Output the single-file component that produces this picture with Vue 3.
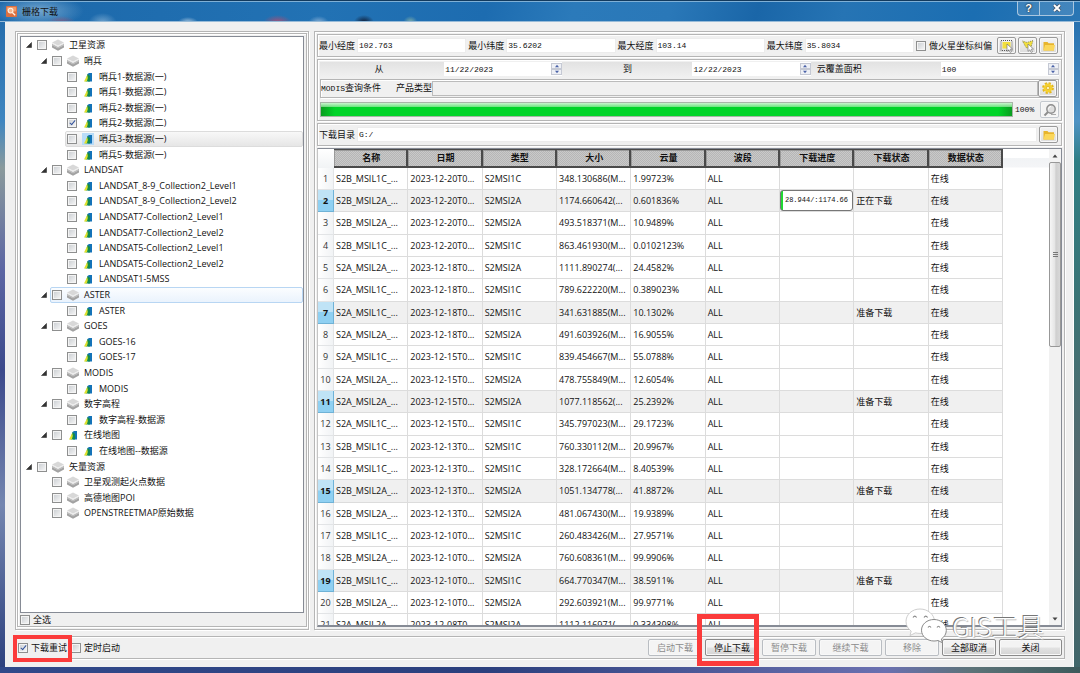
<script setup>
import { reactive, ref } from 'vue'

const tree = reactive([
  { level: 0, open: true, icon: 'stack', label: '卫星资源' },
  { level: 1, open: true, icon: 'stack', label: '哨兵' },
  { level: 2, icon: 'layer', label: '哨兵1-数据源(一)' },
  { level: 2, icon: 'layer', label: '哨兵1-数据源(二)' },
  { level: 2, icon: 'layer', label: '哨兵2-数据源(一)' },
  { level: 2, icon: 'layer', label: '哨兵2-数据源(二)', checked: true },
  { level: 2, icon: 'layer', label: '哨兵3-数据源(一)', state: 'selected' },
  { level: 2, icon: 'layer', label: '哨兵5-数据源(一)' },
  { level: 1, open: true, icon: 'stack', label: 'LANDSAT' },
  { level: 2, icon: 'layer', label: 'LANDSAT_8-9_Collection2_Level1' },
  { level: 2, icon: 'layer', label: 'LANDSAT_8-9_Collection2_Level2' },
  { level: 2, icon: 'layer', label: 'LANDSAT7-Collection2_Level1' },
  { level: 2, icon: 'layer', label: 'LANDSAT7-Collection2_Level2' },
  { level: 2, icon: 'layer', label: 'LANDSAT5-Collection2_Level1' },
  { level: 2, icon: 'layer', label: 'LANDSAT5-Collection2_Level2' },
  { level: 2, icon: 'layer', label: 'LANDSAT1-5MSS' },
  { level: 1, open: true, icon: 'stack', label: 'ASTER', state: 'hovered' },
  { level: 2, icon: 'layer', label: 'ASTER' },
  { level: 1, open: true, icon: 'stack', label: 'GOES' },
  { level: 2, icon: 'layer', label: 'GOES-16' },
  { level: 2, icon: 'layer', label: 'GOES-17' },
  { level: 1, open: true, icon: 'stack', label: 'MODIS' },
  { level: 2, icon: 'layer', label: 'MODIS' },
  { level: 1, open: true, icon: 'stack', label: '数字高程' },
  { level: 2, icon: 'layer', label: '数字高程-数据源' },
  { level: 1, open: true, icon: 'layer', label: '在线地图' },
  { level: 2, icon: 'layer', label: '在线地图--数据源' },
  { level: 0, open: true, icon: 'stack', label: '矢量资源' },
  { level: 1, icon: 'stack', label: '卫星观测起火点数据' },
  { level: 1, icon: 'stack', label: '高德地图POI' },
  { level: 1, icon: 'stack', label: 'OPENSTREETMAP原始数据' },
])

const bounds = reactive([
  { id: 'min-lon', label: '最小经度', value: '102.763' },
  { id: 'min-lat', label: '最小纬度', value: '35.6202' },
  { id: 'max-lon', label: '最大经度', value: '103.14' },
  { id: 'max-lat', label: '最大纬度', value: '35.8034' },
])

const filters = reactive([
  { id: 'date-from', label: '从', value: '11/22/2023', centered: true },
  { id: 'date-to', label: '到', value: '12/22/2023', centered: true },
  { id: 'cloud', label: '云覆盖面积', value: '100', centered: false },
])

const productType = ref('')
const folder = ref('G:/')
const marsFix = ref(false)
const selectAll = ref(false)
const retry = ref(true)
const scheduled = ref(false)
const percent = ref(100)

const columns = ['名称', '日期', '类型', '大小', '云量', '波段', '下载进度', '下载状态', '数据状态']

const waiting = '准备下载'
const rows = [
  ['S2B_MSIL1C_...', '2023-12-20T0...', 'S2MSI1C', '348.130686(M...', '1.99723%', ''],
  ['S2B_MSIL2A_...', '2023-12-20T0...', 'S2MSI2A', '1174.660642(...', '0.601836%', '正在下载'],
  ['S2B_MSIL2A_...', '2023-12-20T0...', 'S2MSI2A', '493.518371(M...', '10.9489%', ''],
  ['S2B_MSIL1C_...', '2023-12-20T0...', 'S2MSI1C', '863.461930(M...', '0.0102123%', ''],
  ['S2A_MSIL2A_...', '2023-12-18T0...', 'S2MSI2A', '1111.890274(...', '24.4582%', ''],
  ['S2A_MSIL1C_...', '2023-12-18T0...', 'S2MSI1C', '789.622220(M...', '0.389023%', ''],
  ['S2A_MSIL1C_...', '2023-12-18T0...', 'S2MSI1C', '341.631885(M...', '10.1302%', waiting],
  ['S2A_MSIL2A_...', '2023-12-18T0...', 'S2MSI2A', '491.603926(M...', '16.9055%', ''],
  ['S2A_MSIL1C_...', '2023-12-15T0...', 'S2MSI1C', '839.454667(M...', '55.0788%', ''],
  ['S2A_MSIL2A_...', '2023-12-15T0...', 'S2MSI2A', '478.755849(M...', '12.6054%', ''],
  ['S2A_MSIL2A_...', '2023-12-15T0...', 'S2MSI2A', '1077.118562(...', '25.2392%', waiting],
  ['S2A_MSIL1C_...', '2023-12-15T0...', 'S2MSI1C', '345.797023(M...', '29.1723%', ''],
  ['S2B_MSIL1C_...', '2023-12-13T0...', 'S2MSI1C', '760.330112(M...', '20.9967%', ''],
  ['S2B_MSIL1C_...', '2023-12-13T0...', 'S2MSI1C', '328.172664(M...', '8.40539%', ''],
  ['S2B_MSIL2A_...', '2023-12-13T0...', 'S2MSI2A', '1051.134778(...', '41.8872%', waiting],
  ['S2B_MSIL2A_...', '2023-12-13T0...', 'S2MSI2A', '481.067430(M...', '19.9389%', ''],
  ['S2B_MSIL1C_...', '2023-12-10T0...', 'S2MSI1C', '260.483426(M...', '27.9571%', ''],
  ['S2B_MSIL2A_...', '2023-12-10T0...', 'S2MSI2A', '760.608361(M...', '99.9906%', ''],
  ['S2B_MSIL1C_...', '2023-12-10T0...', 'S2MSI1C', '664.770347(M...', '38.5911%', waiting],
  ['S2B_MSIL2A_...', '2023-12-10T0...', 'S2MSI2A', '292.603921(M...', '99.9771%', ''],
  ['S2A_MSIL2A_...', '2023-12-08T0...', 'S2MSI2A', '1112.116971(...', '0.334398%', ''],
].map(([name, date, type, size, cloud, status], i) => ({
  n: i + 1, name, date, type, size, cloud, status,
  progress: i === 1 ? '28.944/:1174.66' : '',
}))

const actions = [
  { label: '启动下载', disabled: true },
  { label: '停止下载', disabled: false, marked: true },
  { label: '暂停下载', disabled: true },
  { label: '继续下载', disabled: true, wide: true },
  { label: '移除', disabled: true },
  { label: '全部取消', disabled: false },
  { label: '关闭', disabled: false, wide: true },
]
</script>

<template>
  <div class="window">
    <header class="titlebar">
      <svg class="app-icon" viewBox="0 0 12 12" aria-hidden="true">
        <rect width="12" height="12" rx="1" fill="#dc7040" />
        <rect x="1" y="1" width="10" height="5" rx="1" fill="#ee9a6a" />
        <circle cx="5" cy="5" r="2.6" fill="#f5b68e" stroke="#fff3e6" stroke-width="1.1" />
        <path d="M7 7l3 3" stroke="#fff3e6" stroke-width="1.5" />
      </svg>
      <h1>栅格下载</h1>
      <div class="caption-buttons">
        <button type="button" aria-label="帮助">?</button>
        <button type="button" aria-label="关闭窗口">
          <svg viewBox="0 0 10 8" aria-hidden="true">
            <path d="M2 1l6 6M8 1l-6 6" stroke="#44546a" stroke-width="3.4" />
            <path d="M2 1l6 6M8 1l-6 6" stroke="#fff" stroke-width="1.9" />
          </svg>
        </button>
      </div>
    </header>

    <main class="client">
      <div class="panels">
        <section class="left frame">
          <div class="left-inner frame">
            <ul class="tree">
              <li v-for="(node, i) in tree" :key="i" :class="['node', 'level-' + node.level]">
                <span class="arrow">
                  <svg v-if="node.open" viewBox="0 0 6 6" aria-hidden="true"><path d="M5.500 0.500v5h-5z" fill="#333" stroke="#333" stroke-width=".6" /></svg>
                </span>
                <label :class="['node-body', node.state]">
                  <input v-model="node.checked" type="checkbox" class="check" />
                  <span :class="['node-icon', node.icon]">
                    <svg v-if="node.icon === 'stack'" viewBox="0 0 12 12" aria-hidden="true">
                      <path d="M0 6l6 3 6-3v2.500l-6 3.300-6-3.300z" fill="#a2a2a2" />
                      <path d="M0 4.500l6 3 6-3v1.800l-6 3.100-6-3.100z" fill="#bcbcbc" />
                      <path d="M6 .5l6 3-6 3.200-6-3.200z" fill="#d8d8d8" />
                      <path d="M0 3.500l6 3.200 6-3.200v1.200l-6 3.200-6-3.200z" fill="#ececec" />
                    </svg>
                    <svg v-else viewBox="0 0 10 10" aria-hidden="true">
                      <path d="M4.500 2l1.500-1h3v8.500H5z" fill="#1473b8" />
                      <path d="M4.500 2l2.500 2v5.500H2.500z" fill="#118a50" />
                      <path d="M4.200 3L1 9.500h2.800l1-3.500z" fill="#dfe02c" />
                    </svg>
                  </span>
                  <span class="node-label">{{ node.label }}</span>
                </label>
              </li>
            </ul>
            <label class="check-label all"><input v-model="selectAll" type="checkbox" class="check" />全选</label>
          </div>
        </section>

        <section class="right frame">
          <div class="row frame bounds">
            <div v-for="b in bounds" :key="b.id" class="field">
              <label :for="b.id">{{ b.label }}</label>
              <input :id="b.id" v-model="b.value" type="text" class="text" />
            </div>
            <label class="check-label mars"><input v-model="marsFix" type="checkbox" class="check" />做火星坐标纠偏</label>
            <div class="tools">
              <button type="button" class="tool" aria-label="矩形选择">
                <svg viewBox="0 0 14 14" aria-hidden="true">
                  <rect x="1" y="1.500" width="11" height="10" fill="none" stroke="#555" stroke-dasharray="1 1" />
                  <rect x="2.500" y="3" width="8" height="6.500" fill="#f2df3c" />
                  <path d="M7 5l5.500 5-2.300.2 1.300 2.600-1.400.6-1.200-2.600L7 12.400z" fill="#fff" stroke="#777" stroke-width=".7" />
                </svg>
              </button>
              <button type="button" class="tool" aria-label="多边形选择">
                <svg viewBox="0 0 14 14" aria-hidden="true">
                  <path d="M1.500 2l4.500 1.500L12 1.500 9.500 10 5 8.500z" fill="#f2df3c" />
                  <path d="M1.500 2l4.500 1.500L12 1.500 9.500 10 5 8.500z" fill="none" stroke="#8a8a5a" stroke-dasharray="1 1" />
                  <path d="M7 5l5.500 5-2.300.2 1.300 2.600-1.400.6-1.200-2.600L7 12.400z" fill="#fff" stroke="#777" stroke-width=".7" />
                </svg>
              </button>
              <button type="button" class="tool" aria-label="打开范围文件">
                <svg viewBox="0 0 14 14" aria-hidden="true">
                  <path d="M1.500 3h4l1 1.300h5.500v7.200H1.500z" fill="#e8b52c" />
                  <path d="M3 6h10l-1.200 5.500H1.500z" fill="#fbd75a" />
                </svg>
              </button>
            </div>
          </div>

          <div class="frame query">
            <div class="filters">
              <template v-for="f in filters" :key="f.id">
                <label :for="f.id" :class="{ centered: f.centered }">{{ f.label }}</label>
                <div class="spin">
                  <input :id="f.id" v-model="f.value" type="text" class="text" />
                  <div class="steps">
                    <button type="button" aria-label="增加"><svg viewBox="0 0 6 4" aria-hidden="true"><path d="M1 3.200h4L3 .8z" fill="#4a62a8" /></svg></button>
                    <button type="button" aria-label="减少"><svg viewBox="0 0 6 4" aria-hidden="true"><path d="M1 .8h4L3 3.200z" fill="#4a62a8" /></svg></button>
                  </div>
                </div>
              </template>
            </div>
            <div class="frame modis">
              <span class="modis-title"><span class="mono">MODIS</span>查询条件</span>
              <label for="product">产品类型</label>
              <input id="product" v-model="productType" type="text" class="text flat" readonly />
              <button type="button" class="tool" aria-label="设置">
                <svg viewBox="0 0 14 14" aria-hidden="true">
                  <circle cx="7" cy="7" r="4.800" fill="none" stroke="#e3b51c" stroke-width="2.200" stroke-dasharray="2.200 1.570" />
                  <circle cx="7" cy="7" r="4.400" fill="#f4d02f" />
                  <circle cx="7" cy="7" r="1.600" fill="#fff6c0" stroke="#d4a414" stroke-width=".6" />
                </svg>
              </button>
            </div>
            <div class="progress-row">
              <div class="bar" role="progressbar" :aria-valuenow="percent"><div class="fill" :style="{ width: percent + '%' }"></div></div>
              <span class="mono percent">{{ percent }}%</span>
              <button type="button" class="tool dim" aria-label="查询" disabled>
                <svg viewBox="0 0 14 14" aria-hidden="true">
                  <circle cx="8" cy="6" r="4.200" fill="#dedede" stroke="#8e8e8e" stroke-width="1.400" />
                  <path d="M5.500 6.500c0-2 1.200-3 2.500-3" fill="none" stroke="#fff" />
                  <path d="M5 9l-3.500 3.500" stroke="#8e8e8e" stroke-width="2" />
                  <path d="M8 11.500h5" stroke="#aaa" />
                </svg>
              </button>
            </div>
          </div>

          <div class="row frame folder">
            <label for="folder">下载目录</label>
            <input id="folder" v-model="folder" type="text" class="text" />
            <button type="button" class="tool" aria-label="选择目录">
              <svg viewBox="0 0 14 14" aria-hidden="true">
                <path d="M1.500 3h4l1 1.300h5.500v7.200H1.500z" fill="#e8b52c" />
                <path d="M3 6h10l-1.200 5.500H1.500z" fill="#fbd75a" />
              </svg>
            </button>
          </div>

          <div class="grid">
            <div class="sheet">
              <table>
                <thead>
                  <tr>
                    <td class="corner"></td>
                    <th v-for="c in columns" :key="c" scope="col">{{ c }}</th>
                  </tr>
                </thead>
                <tbody>
                  <tr v-for="r in rows" :key="r.n" :class="{ picked: r.status }">
                    <th scope="row">{{ r.n }}</th>
                    <td>{{ r.name }}</td>
                    <td>{{ r.date }}</td>
                    <td>{{ r.type }}</td>
                    <td>{{ r.size }}</td>
                    <td>{{ r.cloud }}</td>
                    <td>ALL</td>
                    <td class="progress-cell"><div v-if="r.progress" class="cell-progress">{{ r.progress }}</div></td>
                    <td>{{ r.status }}</td>
                    <td>在线</td>
                  </tr>
                </tbody>
              </table>
            </div>
            <div class="scroll">
              <button type="button" aria-label="向上滚动"><svg viewBox="0 0 8 6" aria-hidden="true"><path d="M1.500 4.500h5L4 1.500z" fill="#444" /></svg></button>
              <div class="track"><div class="thumb"><i></i><i></i><i></i></div></div>
              <button type="button" aria-label="向下滚动"><svg viewBox="0 0 8 6" aria-hidden="true"><path d="M1.500 1.500h5L4 4.500z" fill="#444" /></svg></button>
            </div>
          </div>
        </section>
      </div>

      <footer class="footer">
        <div class="options">
          <label class="check-label marked-option"><input v-model="retry" type="checkbox" class="check" />下载重试</label>
          <label class="check-label"><input v-model="scheduled" type="checkbox" class="check" />定时启动</label>
        </div>
        <div class="actions">
          <div v-for="a in actions" :key="a.label" :class="['action', { wide: a.wide, marked: a.marked }]">
            <button type="button" :disabled="a.disabled">{{ a.label }}</button>
          </div>
        </div>
      </footer>
    </main>

    <div class="watermark">
      <svg viewBox="0 0 42 38" aria-hidden="true">
        <path d="M15 2C7 2 1 7.500 1 14.500c0 4 2 7.300 5.200 9.600L5 28.500l5.500-2.700c1.500.4 3 .6 4.500.6 8 0 14.500-5.400 14.500-12S23 2 15 2z" fill="#fff" stroke="#c2c2c2" stroke-width=".8" />
        <path d="M29 12.500c-7 0-12.500 4.700-12.500 10.700S22 34 29 34c1.400 0 2.700-.2 4-.5l4.500 2.300-1.200-3.800c3-2 5-5 5-8.600 0-6.100-5.500-10.900-12.300-10.900z" fill="#fff" stroke="#8a8a8a" />
        <path d="M8 10.500q1.800-2.800 3.600 0M19 10.500q1.800-2.800 3.600 0M23 20.500q1.500-2.500 3 0M32 20.500q1.500-2.500 3 0" fill="none" stroke="#888" stroke-width="1.100" />
      </svg>
      <span>GIS工具</span>
    </div>
  </div>
</template>

<style>
html, body, #app { height: 100%; }
body { margin: 0; overflow: hidden; }
</style>

<style scoped>
.window {
  position: relative;
  box-sizing: border-box;
  height: 100vh;
  padding: 0 6px 6px 5px;
  display: flex;
  flex-direction: column;
  font: 9px/12px "Open Sans", "Noto Sans CJK SC", sans-serif;
  color: #111;
  background:
    linear-gradient(90deg, #31498a, #2b3f7d 45%, #6a70b0 82%, #5c7378 90%, #3d5a5c) bottom / 100% 6px no-repeat,
    linear-gradient(#1f6aab, #4f93c4 18%, #2f7f84 24%, #3b7475 45%, #56696f 70%, #40666a) right / 6px 100% no-repeat,
    linear-gradient(#2068a8, #3f86c0 18%, #8a9a9c 25%, #5c66a4 40%, #3c4a8c 55%, #7486b0 75%, #2b3f7d) left / 5px 100% no-repeat,
    #2070b0;
}
.titlebar {
  flex: none;
  box-sizing: border-box;
  height: 22px;
  margin: 0 -6px 0 -5px;
  padding-left: 6px;
  border-top: 1px solid #123a5e;
  box-shadow: inset 0 1px #7fb0d6, inset 0 -1px #98bbd8;
  display: flex;
  align-items: center;
  gap: 5px;
  background:
    radial-gradient(10px 5px at 17.4% 100%, rgba(235, 240, 245, .6), transparent),
    radial-gradient(14px 9px at 9.5% 100%, rgba(220, 235, 245, .4), transparent),
    radial-gradient(14px 6px at 5.700% 100%, rgba(190, 70, 90, .5), transparent),
    radial-gradient(14px 7px at 25.700% 100%, rgba(205, 70, 100, .75), transparent),
    radial-gradient(10px 6px at 29.500% 100%, rgba(220, 225, 240, .5), transparent),
    radial-gradient(10px 7px at 33.700% 100%, rgba(15, 20, 40, .9), transparent),
    radial-gradient(7px 6px at 38% 100%, rgba(190, 215, 160, .6), transparent),
    radial-gradient(46px 16px at 38px 10px, rgba(200, 225, 240, .5), transparent),
    linear-gradient(105deg, #1c68aa 0%, #2272b4 30%, #1d6cb0 45%, #2b7aba 53%, #2a78b8 62%, #1a66a8 70%, #2674b4 78%, #1b6eb2 90%, #2a76b4 100%);
}
.app-icon { width: 11px; height: 11px; }
h1 { margin: 0; font-size: 9px; font-weight: 400; line-height: 12px; }
.caption-buttons {
  align-self: flex-start;
  margin: 0 6px 0 auto;
  display: flex;
  height: 14px;
  border: 1px solid #a9c6df;
  border-top: 0;
  border-radius: 0 0 4px 4px;
}
.caption-buttons button {
  width: 21px;
  padding: 0;
  border: 0;
  background: rgba(255, 255, 255, .12);
  color: #fff;
  font: 700 11px/13px "Liberation Sans", sans-serif;
  text-shadow: 0 0 1px #222, 0 0 2px #222;
}
.caption-buttons button + button { width: 34px; border-left: 1px solid #a9c6df; }
.caption-buttons svg { width: 10px; height: 8px; }

.client {
  flex: 1;
  min-height: 0;
  box-sizing: border-box;
  padding: 9px 8px 8px 10px;
  display: flex;
  flex-direction: column;
  gap: 6px;
  background: #f0f0f0;
  border-right: 1px solid #fff;
}
.panels { flex: 1; min-height: 0; display: flex; gap: 5px; }
.frame { box-sizing: border-box; border: 1px solid #b5b5b5; box-shadow: inset 1px 1px #fff, 1px 1px #fff; }
.left { flex: 0 0 28%; padding: 1px 1px 2px 1px; display: flex; }
.left-inner { flex: 1; min-width: 0; padding: 2px 2px 0; display: flex; flex-direction: column; }
.tree {
  flex: 1;
  min-height: 0;
  overflow: hidden;
  margin: 0;
  padding: 0 0 0 2px;
  list-style: none;
  background: #fff;
  border: 1px solid #868b95;
}
.node { display: flex; height: 16px; }
.node:nth-child(5n), .node:nth-child(5n + 3) { height: 15px; }
.level-1 { padding-left: 15px; }
.level-2 { padding-left: 30px; }
.arrow { flex: none; width: 12px; display: flex; align-items: center; justify-content: center; }
.arrow svg { width: 6px; height: 6px; }
.node-body {
  flex: 1;
  box-sizing: border-box;
  min-width: 0;
  display: flex;
  align-items: center;
  border: 1px solid transparent;
  border-radius: 2px;
  padding-left: 1px;
  white-space: nowrap;
}
.node-body.selected { border-color: #dcdcdc; background: linear-gradient(#f8f8f8, #e6e6e6); }
.node-body.hovered { border-color: #b8d6f3; background: linear-gradient(#fbfdff, #eaf3fd); }
.node-icon { width: 12px; height: 12px; margin: 0 5px; display: flex; align-items: center; justify-content: center; }
.node-icon.stack svg { width: 12px; height: 12px; }
.node-icon.layer svg { width: 10px; height: 10px; }
.selected .node-icon { background: #b9dcf8; }
.check {
  appearance: none;
  flex: none;
  box-sizing: border-box;
  width: 10px;
  height: 10px;
  margin: 0;
  border: 1px solid #8e8f8f;
  background: linear-gradient(135deg, #c8ccd0, #f8f8f8);
  box-shadow: inset 0 0 0 1px #f4f4f4;
}
.check:checked::after {
  content: "";
  display: block;
  width: 2px;
  height: 5px;
  margin: 0 auto;
  border: solid #33539c;
  border-width: 0 1px 1px 0;
  transform: rotate(40deg);
}
.check-label { display: flex; align-items: center; gap: 3px; white-space: nowrap; }
.all { height: 13px; }

.right { flex: 1; min-width: 0; padding: 2px; display: flex; flex-direction: column; gap: 2px; }
.row { display: flex; align-items: center; gap: 2px; padding: 0 3px 0 1px; }
.bounds { height: 23px; }
.field { flex: 1; min-width: 0; display: flex; align-items: center; gap: 2px; white-space: nowrap; }
.text {
  box-sizing: border-box;
  flex: 1;
  min-width: 0;
  width: 100%;
  height: 15px;
  margin: 0;
  padding: 0 1px;
  border: 1px solid #ececec;
  background: #fff;
  color: #111;
  font: 8px/12px "Liberation Mono", monospace;
}
.mono { font-family: "Liberation Mono", monospace; font-size: 8px; }
.mars { margin-right: 3px; }
.tools { display: flex; gap: 2px; }
.tool {
  flex: none;
  box-sizing: border-box;
  width: 19px;
  height: 17px;
  padding: 0;
  display: flex;
  align-items: center;
  justify-content: center;
  border: 1px solid #9a9a9a;
  border-radius: 2px;
  background: linear-gradient(#f4f4f4, #ddd);
  box-shadow: inset 0 0 0 1px #f8f8f8;
}
.tool svg { width: 14px; height: 14px; }
.tool.dim { border-color: #c4c9cf; background: #f4f4f4; }
.query { padding: 2px 2px 2px 2px; display: flex; flex-direction: column; gap: 2px; height: 62px; }
.filters {
  display: grid;
  grid-template-columns: repeat(6, minmax(0, 1fr));
  gap: 6px;
  height: 15px;
  align-items: center;
  background: linear-gradient(#e2e2e2, #f0f0f0);
}
.centered { text-align: center; }
.spin { display: flex; height: 14px; background: #fff; }
.spin .text { border: 0; height: 14px; }
.steps { display: flex; flex-direction: column; width: 11px; padding: 1px 0; }
.steps button { flex: 1; min-height: 0; padding: 0; border: 1px solid #c5c9d4; background: #eef0f5; display: flex; align-items: center; justify-content: center; }
.steps svg { width: 6px; height: 4px; }
.modis { display: flex; align-items: center; height: 20px; padding-right: 1px; white-space: nowrap; }
.modis-title { margin-right: 15px; }
.flat { background: #f0f0f0; border-color: #bbb; }
.progress-row { display: flex; align-items: center; height: 17px; margin-top: 1px; }
.bar { flex: 1; box-sizing: border-box; height: 15px; border: 1px solid #a6b5a6; background: #e6e6e6; }
.fill {
  height: 100%;
  background:
    linear-gradient(#c9f5ce, rgba(150, 235, 160, .7)) top / 100% 4px no-repeat,
    linear-gradient(90deg, #0a9c20, #00d428 2%, #00d428 98%, #0a9c20);
}
.percent { width: 27px; padding-left: 2px; box-sizing: border-box; }
.folder { height: 23px; white-space: nowrap; }

.grid { flex: 1; min-height: 0; display: flex; background: #fff; border: 1px solid #868b95; border-left-color: #c4c4c4; border-width: 1px 1px 2px; box-sizing: border-box; }
.sheet { flex: 1; min-width: 0; padding-right: 46px; overflow: hidden; background: linear-gradient(#fff 9px, #f1f3f5 9px, #f4f5f7 18px, #fff 19px); }
table { width: 100%; border-collapse: separate; border-spacing: 0; table-layout: fixed; background: #fff; }
td, th { box-sizing: border-box; padding: 0 0 0 2px; overflow: hidden; white-space: nowrap; text-align: left; }
thead tr { height: 19px; }
thead th {
  text-align: center;
  font-weight: 700;
  border: solid #4a4a4a;
  border-width: 1px 2px 2px 0;
  box-shadow: inset 1px 1px #9a9a9a;
  background: repeating-conic-gradient(#b6b6b6 0 25%, #c9c9c9 0 50%) 0 0 / 2px 2px;
}
.corner { width: 16px; background: linear-gradient(#fff, #f1f3f5); }
tbody tr { height: 22px; }
tbody tr:nth-child(3n) { height: 23px; }
tbody td { border: solid #dcdcdc; border-width: 0 1px 1px 0; }
tbody th { font-weight: 400; padding: 0; text-align: center; color: #333; border-right: 1px solid #e2e4e6; border-bottom: 1px solid #e2e4e6; background: linear-gradient(90deg, #fff, #f1f3f5); }
.picked td { background: #f0f0f0; }
.picked th { font-weight: 700; color: #111; background: linear-gradient(#bfe3f6 45%, #8fd0f2 50%); border-color: #6fb2d6; }
tbody td.progress-cell { padding: 0; }
.cell-progress {
  box-sizing: border-box;
  height: 21px;
  padding-left: 4px;
  overflow: hidden;
  border: 1px solid #777;
  border-radius: 3px;
  background: linear-gradient(90deg, #1fd832 2px, #fff 2px);
  font: 7px/19px "Liberation Mono", monospace;
}
.scroll { flex: none; width: 12px; display: flex; flex-direction: column; background: #f1f1f1; }
.scroll button { height: 13px; padding: 0; border: 0; background: #f3f3f3; display: flex; align-items: center; justify-content: center; }
.scroll svg { width: 8px; height: 6px; }
.track { flex: 1; }
.thumb {
  box-sizing: border-box;
  height: 41%;
  border: 1px solid #989898;
  border-radius: 2px;
  background: linear-gradient(90deg, #f6f6f6, #e6e6e6 45%, #cfcfcf 60%, #d8d8d8);
  display: flex;
  flex-direction: column;
  align-items: center;
  justify-content: center;
  gap: 1px;
}
.thumb i { width: 5px; height: 1px; background: #777; }

.footer {
  flex: none;
  box-sizing: border-box;
  height: 23px;
  display: flex;
  align-items: center;
  justify-content: space-between;
  padding: 0 2px 0 3px;
  border: solid #b5b5b5;
  border-width: 1px 1px 1px 0;
  box-shadow: 0 1px #fff, inset 0 1px #fff;
}
.options { display: flex; gap: 4px; }
.marked-option, .marked { position: relative; }
.marked-option::after, .marked::after {
  content: "";
  position: absolute;
  z-index: 2;
  inset: -7px -5px -8px;
  border: 4px solid #fb3b3b;
  pointer-events: none;
}
.marked::after { inset: -25px 0 -10px -8px; border-width: 5px; }
.actions { display: flex; gap: 3px; }
.action { width: 54px; display: flex; }
.action.wide { width: 63px; }
.action button {
  flex: 1;
  height: 17px;
  padding: 0;
  border: 1px solid #8a8a8a;
  border-radius: 2px;
  background: linear-gradient(#f3f3f3 48%, #e2e2e2 52%, #d4d4d4);
  box-shadow: inset 0 0 0 1px #f8f8f8;
  color: #111;
  font: inherit;
}
.action button:disabled { border-color: #b9bdc2; background: #f4f4f4; color: #8b8b8b; }

.watermark {
  position: absolute;
  z-index: 3;
  right: 36px;
  bottom: 28px;
  display: flex;
  align-items: center;
  gap: 5px;
  color: #fff;
  font: 26px/30px "Noto Sans CJK SC", sans-serif;
  font-weight: 300;
  text-shadow: -1px -1px #777, 1px 1px 1px #bbb;
  pointer-events: none;
}
.watermark svg { width: 42px; height: 38px; }
</style>
